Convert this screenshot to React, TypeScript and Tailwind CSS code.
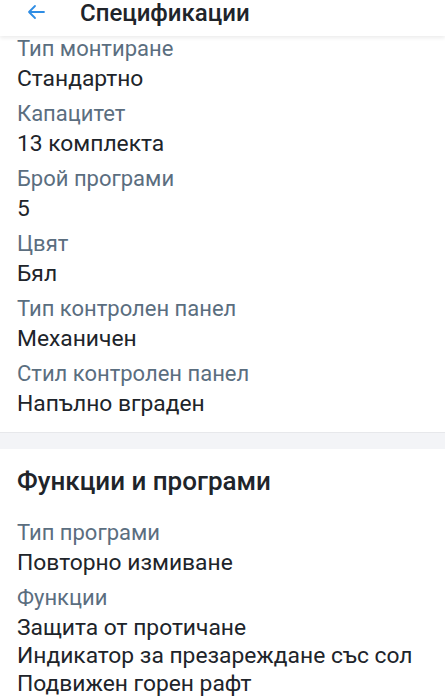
import React from 'react';

type Spec = { label: string; values: string[] };

const main: Spec[] = [
  { label: 'Тип монтиране', values: ['Стандартно'] },
  { label: 'Капацитет', values: ['13 комплекта'] },
  { label: 'Брой програми', values: ['5'] },
  { label: 'Цвят', values: ['Бял'] },
  { label: 'Тип контролен панел', values: ['Механичен'] },
  { label: 'Стил контролен панел', values: ['Напълно вграден'] },
];

const functions: Spec[] = [
  { label: 'Тип програми', values: ['Повторно измиване'] },
  {
    label: 'Функции',
    values: ['Защита от протичане', 'Индикатор за презареждане със сол', 'Подвижен горен рафт'],
  },
];

const SpecRow = ({ spec }: { spec: Spec }) => (
  <div className="pb-[5px]">
    <div className="text-[22px] leading-[32px] text-[#5b6e7f]">{spec.label}</div>
    {spec.values.map((v) => (
      <div key={v} className="text-[22.8px] leading-[28px] text-[#20242a]">
        {v}
      </div>
    ))}
  </div>
);

export default function App() {
  return (
    <div
      className="w-[445px] h-[699px] overflow-hidden bg-white"
      style={{ fontFamily: 'Roboto, "Noto Sans", sans-serif' }}
    >
      {/* Top bar */}
      <div className="relative z-10 h-[36px] flex items-center bg-white shadow-[0_2px_4px_rgba(0,0,0,0.08)]">
        <div className="w-[80px] flex pl-[27px] pb-[12px]">
          <svg width="18" height="16" viewBox="0 0 18 16" fill="none">
            <path
              d="M17 8H2M8 2L2 8l6 6"
              stroke="#2f8de4"
              strokeWidth="1.8"
              strokeLinecap="round"
              strokeLinejoin="round"
            />
          </svg>
        </div>
        <h1 className="text-[24px] font-medium text-[#20242a] pb-[10px]">Спецификации</h1>
      </div>

      {/* Specs */}
      <div className="px-[17px] -mt-[3px] pb-[9px]">
        {main.map((s) => (
          <SpecRow key={s.label} spec={s} />
        ))}
      </div>

      <div className="h-[17px] border-t border-[#e7e8eb] bg-[#f3f4f7]" />

      <div className="px-[17px] pt-[16px]">
        <h2 className="text-[26px] leading-[32px] font-medium text-[#20242a] mb-[20px]">
          Функции и програми
        </h2>
        {functions.map((s) => (
          <SpecRow key={s.label} spec={s} />
        ))}
      </div>
    </div>
  );
}
